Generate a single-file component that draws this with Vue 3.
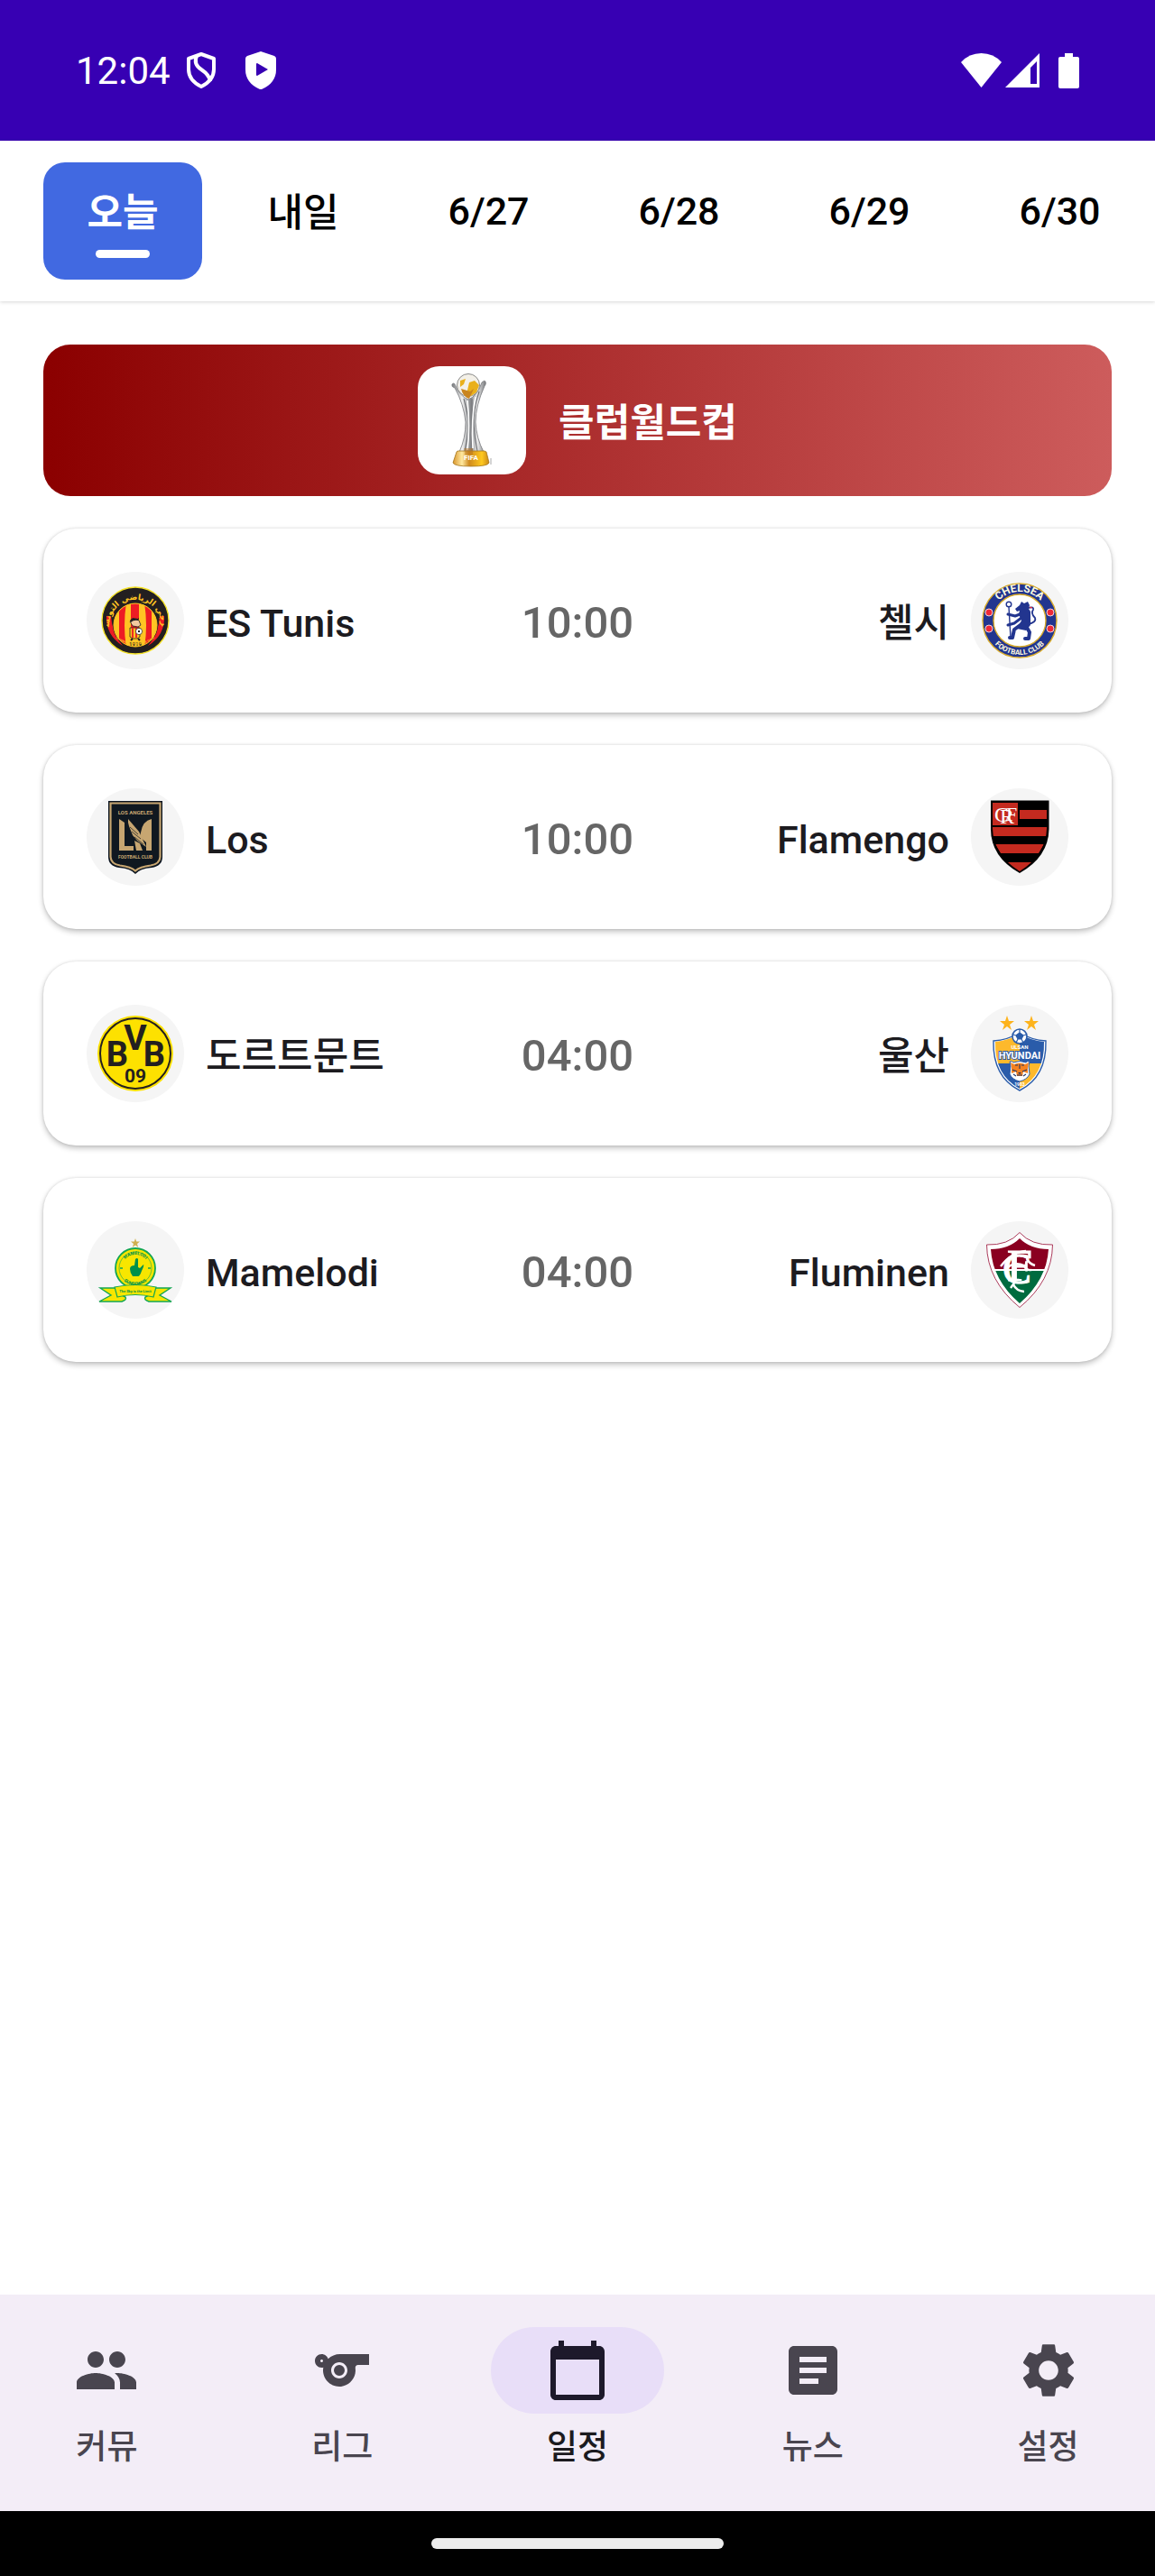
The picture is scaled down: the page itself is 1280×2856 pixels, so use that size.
<script setup>
import { ref } from 'vue'

const days = ['오늘', '내일', '6/27', '6/28', '6/29', '6/30']
const selectedDay = ref(0)

const matches = [
  { home: 'ES Tunis', homeCrest: 'tunis', time: '10:00', away: '첼시', awayCrest: 'chelsea' },
  { home: 'Los', homeCrest: 'lafc', time: '10:00', away: 'Flamengo', awayCrest: 'flamengo' },
  { home: '도르트문트', homeCrest: 'bvb', time: '04:00', away: '울산', awayCrest: 'ulsan' },
  { home: 'Mamelodi', homeCrest: 'sundowns', time: '04:00', away: 'Fluminen', awayCrest: 'fluminense' },
]

const sections = [
  {
    label: '커뮤',
    path: 'M16 11c1.66 0 2.99-1.34 2.99-3S17.66 5 16 5c-1.66 0-3 1.34-3 3s1.34 3 3 3zm-8 0c1.66 0 2.99-1.34 2.99-3S9.66 5 8 5C6.34 5 5 6.34 5 8s1.34 3 3 3zm0 2c-2.33 0-7 1.17-7 3.5V19h14v-2.5c0-2.33-4.67-3.5-7-3.5zm8 0c-.29 0-.62.02-.97.05 1.16.84 1.97 1.97 1.97 3.45V19h6v-2.5c0-2.33-4.67-3.5-7-3.5z',
  },
  {
    label: '리그',
    path: 'M11.23 6c-1.66 0-3.22.66-4.36 1.73C6.54 6.73 5.61 6 4.5 6 3.12 6 2 7.12 2 8.5S3.12 11 4.5 11c.21 0 .41-.03.61-.08-.05.25-.09.51-.1.78-.18 3.68 2.95 6.68 6.68 6.27 2.55-.28 4.68-2.26 5.19-4.77.15-.71.15-1.4.06-2.06-.09-.6.38-1.13.99-1.13H22V6H11.23zM4.5 9c-.28 0-.5-.22-.5-.5s.22-.5.5-.5.5.22.5.5-.22.5-.5.5zM11 15c-1.66 0-3-1.34-3-3s1.34-3 3-3 3 1.34 3 3-1.34 3-3 3zm0-5a2 2 0 1 0 0 4 2 2 0 0 0 0-4z',
  },
  {
    label: '일정',
    path: 'M20 3h-1V1h-2v2H7V1H5v2H4c-1.1 0-2 .9-2 2v16c0 1.1.9 2 2 2h16c1.1 0 2-.9 2-2V5c0-1.1-.9-2-2-2zm0 18H4V8h16v13z',
  },
  {
    label: '뉴스',
    path: 'M19 3H5c-1.1 0-2 .9-2 2v14c0 1.1.9 2 2 2h14c1.1 0 2-.9 2-2V5c0-1.1-.9-2-2-2zm-5 14H7v-2h7v2zm3-4H7v-2h10v2zm0-4H7V7h10v2z',
  },
  {
    label: '설정',
    path: 'M19.14 12.94c.04-.3.06-.61.06-.94 0-.32-.02-.64-.07-.94l2.03-1.58c.18-.14.23-.41.12-.61l-1.92-3.32c-.12-.22-.37-.29-.59-.22l-2.39.96c-.5-.38-1.03-.7-1.62-.94l-.36-2.54c-.04-.24-.24-.41-.48-.41h-3.84c-.24 0-.43.17-.47.41l-.36 2.54c-.59.24-1.13.57-1.62.94l-2.39-.96c-.22-.08-.47 0-.59.22L2.74 8.87c-.12.21-.08.47.12.61l2.03 1.58c-.05.3-.09.63-.09.94s.02.64.07.94l-2.03 1.58c-.18.14-.23.41-.12.61l1.92 3.32c.12.22.37.29.59.22l2.39-.96c.5.38 1.03.7 1.62.94l.36 2.54c.05.24.24.41.48.41h3.84c.24 0 .44-.17.47-.41l.36-2.54c.59-.24 1.13-.56 1.62-.94l2.39.96c.22.08.47 0 .59-.22l1.92-3.32c.12-.22.07-.47-.12-.61l-2.01-1.58zM12 15.6c-1.98 0-3.6-1.62-3.6-3.6s1.62-3.6 3.6-3.6 3.6 1.62 3.6 3.6-1.62 3.6-3.6 3.6z',
  },
]
const activeSection = ref(2)
</script>

<template>
  <div class="screen">
    <!-- Club crests, shared by the match rows -->
    <svg class="sprite" width="0" height="0" aria-hidden="true">
      <defs>
        <path id="arc-tunis-top" d="M25 60A29 29 0 0 1 83 60" />
        <path id="arc-tunis-bottom" d="M20 54A35 35 0 0 0 88 54" />
        <path id="arc-chelsea-top" d="M22 54A32 32 0 0 1 86 54" />
        <path id="arc-chelsea-bottom" d="M16 54A38 38 0 0 0 92 54" />
        <path id="arc-sun-top" d="M39 52A15 15 0 0 1 69 52" />
        <path id="arc-sun-bottom" d="M35 52A19 19 0 0 0 73 52" />
        <clipPath id="clip-tunis"><circle cx="54" cy="59" r="24" /></clipPath>
        <clipPath id="clip-ulsan"><path d="M27 41Q41 40 54 32Q67 40 81 41Q82 78 54 93Q26 78 27 41Z" /></clipPath>
        <clipPath id="clip-flu"><path d="M54 19Q66 31 86 31Q84 65 54 91Q24 65 22 31Q42 31 54 19Z" /></clipPath>
        <clipPath id="clip-fla"><path d="M24 15H84V45Q83 74 54 92Q25 74 24 45Z" /></clipPath>

        <symbol id="crest-tunis" viewBox="0 0 108 108">
          <circle cx="54" cy="54" r="37" fill="#231f20" stroke="#f3e126" stroke-width="1.4" />
          <path d="M22 49Q21 70 40 82Q28 68 27 49Z" fill="#ed1c24" />
          <path d="M86 49Q87 70 68 82Q80 68 81 49Z" fill="#ed1c24" />
          <circle cx="54" cy="59" r="25" fill="#231f20" />
          <g clip-path="url(#clip-tunis)">
            <rect x="28" y="34" width="52" height="52" fill="#ffc423" />
            <path d="M36 34h8q-4 26 0 50h-8zM49 34h9v28h-9zM64 34h8v50h-8q4-24 0-50z" fill="#ed1c24" />
          </g>
          <circle cx="54" cy="59" r="24" fill="none" stroke="#ffc423" />
          <path d="M50 53q4-4 8 1l2 5-3 2-6-1-3-5z" fill="#f2c9a0" stroke="#231f20" stroke-width=".8" />
          <path d="M48 54q3-5 10-3l-1 3q-5-1-8 2z" fill="#231f20" />
          <path d="M51 49q4-2 7 1l-1 2-6-1z" fill="#ed1c24" />
          <path d="M48 62h11v10l-3 2h-5l-3-2z" fill="#ffc423" stroke="#231f20" stroke-width=".8" />
          <path d="M51 62v11M55 62v11" stroke="#ed1c24" stroke-width="1.8" />
          <circle cx="58" cy="66" r="3.6" fill="#fff" stroke="#231f20" stroke-width=".7" />
          <path d="M57 65h2v2h-2z" fill="#231f20" />
          <path d="M51 74l-2 2m8-2l2 2" stroke="#231f20" stroke-width="2" />
          <text x="54" y="82" class="mark" font-size="6" fill="#231f20">1919</text>
          <text class="mark arabic" font-size="9" fill="#ffc423">
            <textPath href="#arc-tunis-top" startOffset="50%">الترجي الرياضي التونسي</textPath>
          </text>
          <text class="mark" font-size="3" fill="#ffc423">
            <textPath href="#arc-tunis-bottom" startOffset="50%">ESPERANCE SPORTIVE DE TUNIS</textPath>
          </text>
        </symbol>

        <symbol id="crest-chelsea" viewBox="0 0 108 108">
          <circle cx="54" cy="54" r="41" fill="#22358f" stroke="#d9ac2b" stroke-width="1.4" />
          <circle cx="54" cy="54" r="29" fill="#fff" stroke="#d9ac2b" stroke-width="1.4" />
          <g fill="#ed2939" stroke="#fff" stroke-width=".8">
            <circle cx="20" cy="45" r="4" /><circle cx="20" cy="63" r="4" />
            <circle cx="88" cy="45" r="4" /><circle cx="88" cy="63" r="4" />
          </g>
          <g fill="none" stroke="#22358f" stroke-linecap="round" stroke-linejoin="round">
            <circle cx="42" cy="36" r="2.8" stroke-width="1.4" />
            <path d="M42 39l2 34" stroke-width="1.4" />
            <path d="M57 46l-8 3-8-2M56 51l-8 6-7 2" stroke-width="3" />
            <path d="M56 58l-8 6-2 9h-3M61 60l4 7-1 7h-4" stroke-width="4" />
            <path d="M63 58q10-2 8-7-5-5-2-9 1-4-5-2" stroke-width="1.8" />
          </g>
          <path d="M54 37l2-4 3 2 4-2 2 4-1 4 2 3v15l-5 6-10-2 5-9-3-7 1-4-3 1-2-3z" fill="#22358f" />
          <path d="M65 39l3 1" stroke="#ed2939" stroke-width="1.2" />
          <text class="mark" font-size="12" fill="#fffbe0">
            <textPath href="#arc-chelsea-top" startOffset="50%">CHELSEA</textPath>
          </text>
          <text class="mark" font-size="8" fill="#fffbe0">
            <textPath href="#arc-chelsea-bottom" startOffset="50%">FOOTBALL CLUB</textPath>
          </text>
        </symbol>

        <symbol id="crest-lafc" viewBox="0 0 108 108">
          <path d="M24 14H84V76Q84 86 72 88Q59 89 54 95Q49 89 36 88Q24 86 24 76Z" fill="#0c1520" />
          <path d="M26.500 16.500H81.500V76Q81 84 71 85.500Q59 87 54 91.500Q49 87 37 85.500Q27 84 26.500 76Z" fill="#101820" stroke="#c7a671" stroke-width="2.2" />
          <path d="M36 34l6 4v26h10v5H36zM60 49q2-13 12-15v35h-6v-9l-7-6zM53 58l6 3 3 8h-7z" fill="#c7a671" />
          <path d="M46 34l12 14 8 17-10-7-5-6-2-5-2-5-1-4z" fill="#c7a671" />
          <path d="M48 43l9 8M50 48l10 8M53 54l10 8" stroke="#101820" stroke-width=".7" />
          <text x="54" y="29" class="mark" font-size="6" fill="#c7a671">LOS ANGELES</text>
          <text x="54" y="78" class="mark" font-size="5" fill="#c7a671">FOOTBALL CLUB</text>
        </symbol>

        <symbol id="crest-flamengo" viewBox="0 0 108 108">
          <path d="M22 13.500H86.500V45Q86 76 54 94Q22 76 22 45Z" fill="#000" />
          <g clip-path="url(#clip-fla)" fill="#c42a1f">
            <path d="M24 16h28v25H24zM54 24h30v10H54zM24 43h60v10H24zM27 62h54l-6 10H33zM39 82h30l-15 12z" />
          </g>
          <g class="monogram" fill="#fff">
            <text x="34" y="37" font-size="24">C</text>
            <text x="40" y="39" font-size="24">R</text>
            <text x="45" y="36" font-size="22">F</text>
          </g>
        </symbol>

        <symbol id="crest-bvb" viewBox="0 0 108 108">
          <circle cx="54" cy="54" r="42" fill="#fde100" />
          <circle cx="54" cy="54" r="39" fill="none" stroke="#231f20" stroke-width="2" />
          <g class="mark" fill="#231f20">
            <text x="34" y="68" font-size="38">B</text>
            <text x="54" y="50" font-size="39">V</text>
            <text x="75" y="68" font-size="38">B</text>
            <text x="54" y="86" font-size="21">09</text>
          </g>
        </symbol>

        <symbol id="crest-ulsan" viewBox="0 0 108 108">
          <path d="M40 12l2 6h6l-5 4 2 6-5-4-5 4 2-6-5-4h6zM67 12l2 6h6l-5 4 2 6-5-4-5 4 2-6-5-4h6z" fill="#fdb31c" />
          <path d="M25 40Q41 39 54 31Q67 39 83 40Q84 80 54 95Q24 80 25 40Z" fill="#fff" stroke="#2a5caa" stroke-width="1.4" />
          <g clip-path="url(#clip-ulsan)">
            <path d="M24 30h30v35H24zM54 65h30v30H54z" fill="#fdb92c" />
            <path d="M54 30h30v35H54zM24 65h30v30H24z" fill="#2a5caa" />
          </g>
          <circle cx="54" cy="35" r="8" fill="#fff" stroke="#2a5caa" stroke-width="1.6" />
          <path d="M54 31l4 3-2 4h-4l-2-4zM54 31v-4M58 34l4-1M56 38l2 4M52 38l-2 4M50 34l-4-1" fill="#2a5caa" stroke="#2a5caa" stroke-width="1.2" />
          <text x="54" y="49" class="mark" font-size="6" fill="#fff">ULSAN</text>
          <text x="54" y="60" class="mark hyundai" font-size="11">HYUNDAI</text>
          <path d="M43 63q3-1 4 1 7-3 14 0 1-2 4-1l-1 5 1 9q-3 6-11 8-8-2-11-8l1-9z" fill="#fff" stroke="#2a5caa" />
          <path d="M44 64l4 2q6-3 12 0l4-2-1 6v6l-5-2-1 5h-6l-1-5-5 2v-6z" fill="#f58220" />
          <path d="M49 67h3M56 67h3M46 72l5 2M62 72l-5 2M54 66v5M51 78h6M47 77l3 2M61 77l-3 2" stroke="#1f3466" stroke-width="1.1" />
          <path d="M52 75h4l-2 2z" fill="#1f3466" />
          <text x="54" y="90" class="mark" font-size="5" fill="#fff">1983</text>
        </symbol>

        <symbol id="crest-sundowns" viewBox="0 0 108 108">
          <path d="M54 19l1.200 3.600h3.800l-3 2.400 1.200 4-3.200-2.400-3.200 2.400 1.200-4-3-2.400h3.800z" fill="#d0b050" />
          <path d="M32 74H15l12 8-13 7h25q6-2 4-5l-4-2M76 74h17l-12 8 13 7H69q-6-2-4-5l4-2" fill="#f7e600" stroke="#13a651" stroke-width="1.400" />
          <circle cx="54" cy="52" r="22" fill="#f7e600" stroke="#13a651" stroke-width="1.800" />
          <circle cx="54" cy="52" r="18" fill="none" stroke="#13a651" stroke-width=".600" />
          <path d="M31 73q23-5 46 0l-3 11q-20-5-40 0z" fill="#f7e600" stroke="#13a651" stroke-width="1.200" />
          <path d="M54 42q2-2 3 0v9l2 1 4-4q1 1-2 7-2 6-4 6h-6q-3-4-3-8 0-4 5-4z" fill="#00904a" />
          <path d="M37 52h3m28 0h3" stroke="#13a651" stroke-width="1.400" />
          <text class="mark" font-size="5" fill="#00904a">
            <textPath href="#arc-sun-top" startOffset="50%">MAMELODI</textPath>
          </text>
          <text class="mark" font-size="5" fill="#00904a">
            <textPath href="#arc-sun-bottom" startOffset="50%">SUNDOWNS</textPath>
          </text>
          <text x="54" y="79" class="mark" font-size="4" fill="#00904a">The Sky is the Limit</text>
        </symbol>

        <symbol id="crest-fluminense" viewBox="0 0 108 108">
          <path d="M54 12.500Q67 27 90.500 26Q90 66 54 95.500Q18 66 17.500 26Q41 27 54 12.500Z" fill="#fff" stroke="#a3264a" stroke-width=".900" />
          <g clip-path="url(#clip-flu)">
            <path d="M20 16h68v37H20z" fill="#8a0020" />
            <path d="M20 55h68v38H20z" fill="#006b3f" />
          </g>
          <g class="monogram" fill="#fff" stroke="#fff">
            <text x="51" y="69" font-size="48">C</text>
            <text x="54" y="66" font-size="50">F</text>
          </g>
          <path d="M33 50q12-16 28-17M62 41q2 6 9 8M39 53q8-9 20-4 2 6 8 5M47 70q3 7 12 8M44 74l5-7" fill="none" stroke="#fff" stroke-width="2.400" />
        </symbol>
      </defs>
    </svg>

    <header class="status-bar">
      <div class="status-group">
        <span class="clock">12:04</span>
        <svg class="shield" width="34" height="42" viewBox="0 0 34 42" aria-hidden="true">
          <path d="M17 3L31 8V20Q31 32 17 39Q3 32 3 20V8Z" fill="none" stroke="#fff" stroke-width="4" stroke-linejoin="round" />
          <path d="M12 5Q8 14 17 20T27 33" fill="none" stroke="#fff" stroke-width="4" />
        </svg>
        <svg class="shield play" width="34" height="42" viewBox="0 0 34 42" aria-hidden="true">
          <path d="M17 0L32 5Q34 6 34 8V20Q34 35 18 42H16Q0 35 0 20V8Q0 6 2 5Z" fill="#fff" />
          <path d="M13 13L25 20L13 27Q12 27 12 26V14Q12 13 13 13Z" fill="#3700b3" />
        </svg>
      </div>
      <div class="status-group">
        <svg width="45" height="38" viewBox="0 0 45 38" aria-hidden="true">
          <path d="M0 10Q9 0 22.500 0T45 10L22.500 38Z" fill="#fff" />
        </svg>
        <svg class="signal" width="38" height="38" viewBox="0 0 38 38" aria-hidden="true">
          <path d="M38 0V38H0ZM35 9L28 16V34H35Z" fill="#fff" fill-rule="evenodd" />
        </svg>
        <svg class="battery" width="23" height="39" viewBox="0 0 23 39" aria-hidden="true">
          <path d="M7 0h9v4h5q2 0 2 2v31q0 2-2 2H2q-2 0-2-2V6q0-2 2-2h5z" fill="#fff" />
        </svg>
      </div>
    </header>

    <div class="days" role="tablist">
      <button
        v-for="(day, i) in days"
        :key="day"
        type="button"
        role="tab"
        class="day"
        :class="{ selected: i === selectedDay, date: i > 1 }"
        :aria-selected="i === selectedDay"
        @click="selectedDay = i"
      >
        <span>{{ day }}</span>
        <span v-if="i === selectedDay" class="indicator"></span>
      </button>
    </div>

    <main class="content">
      <h2 class="league">
        <span class="league-logo">
          <svg width="120" height="120" viewBox="0 0 120 120" aria-hidden="true">
            <defs>
              <linearGradient id="silver" x1="0" x2="1">
                <stop offset="0" stop-color="#77797c" />
                <stop offset=".3" stop-color="#f4f4f4" />
                <stop offset=".55" stop-color="#85878a" />
                <stop offset=".75" stop-color="#e9e9e9" />
                <stop offset="1" stop-color="#77797c" />
              </linearGradient>
              <linearGradient id="gold" x1="0" x2="1">
                <stop offset="0" stop-color="#d9952b" />
                <stop offset=".25" stop-color="#ffe9a0" />
                <stop offset=".45" stop-color="#cf8a1e" />
                <stop offset=".8" stop-color="#ffc91f" />
                <stop offset="1" stop-color="#c98718" />
              </linearGradient>
            </defs>
            <path d="M38 20q2-2 3 0Q46 33 56 37Q66 33 71 18q3-3 4-1 1 3-1 5Q64 44 64 62Q65 80 73 95H46Q53 80 53 62Q51 42 41 24Q37 23 38 20Z" fill="url(#silver)" stroke="#77797c" stroke-width=".800" />
            <path d="M51 36q6 22 5 32-1 14-4 26M60 36v58M68 28q-7 22-6 36 1 16 4 30" fill="none" stroke="#6d6f73" stroke-width="1.100" />
            <path d="M55 38q3 28 0 55M64 34q-5 24-3 57" fill="none" stroke="#fff" stroke-width="1.600" />
            <circle cx="56" cy="21" r="12.500" fill="#f3f0e8" stroke="#8a8a8a" />
            <path d="M47 16l6-2-2 6-4 3zM57 18l6-2 5 5-3 8-6 4-5-2z" fill="#e9b01b" />
            <path d="M48 25l10 3 4-3-5 11q-7-2-9-11z" fill="#c98520" />
            <path d="M44 94h30l2 1 3 12q-1 4-20 4t-20-4l4-12z" fill="url(#gold)" stroke="#a47720" stroke-width=".800" />
            <path d="M51 91q2 5 1 7h9v-7z" fill="#b9731c" opacity=".500" />
            <text x="59" y="104" class="mark" font-size="8" fill="#fff">FIFA</text>
            <path d="M81 102v7" stroke="#aaa" />
          </svg>
        </span>
        <span class="league-name">클럽월드컵</span>
      </h2>

      <article v-for="match in matches" :key="match.home" class="match">
        <div class="team">
          <svg class="crest" width="108" height="108" aria-hidden="true"><use :href="`#crest-${match.homeCrest}`" /></svg>
          <span class="name">{{ match.home }}</span>
        </div>
        <time class="kickoff">{{ match.time }}</time>
        <div class="team away">
          <span class="name">{{ match.away }}</span>
          <svg class="crest" width="108" height="108" aria-hidden="true"><use :href="`#crest-${match.awayCrest}`" /></svg>
        </div>
      </article>
    </main>

    <nav class="bottom-nav">
      <a
        v-for="(section, i) in sections"
        :key="section.label"
        href="#"
        class="section"
        :class="{ active: i === activeSection }"
        @click.prevent="activeSection = i"
      >
        <span class="pill">
          <svg width="72" height="72" viewBox="0 0 24 24" fill="currentColor" aria-hidden="true"><path :d="section.path" /></svg>
        </span>
        <span>{{ section.label }}</span>
      </a>
    </nav>
    <footer class="gesture-bar"><span class="handle"></span></footer>
  </div>
</template>

<style>
body {
  margin: 0;
  background: #fff;
}
</style>

<style scoped>
.screen {
  display: flex;
  flex-direction: column;
  min-height: 100vh;
  overflow-x: hidden;
  background: #fff;
  color: #1c1b1f;
  font-family: Roboto, "Noto Sans CJK KR", sans-serif;
  font-size: 43px;
  font-weight: 500;
}

.sprite {
  display: block;
}

.mark {
  font-family: Roboto, sans-serif;
  font-weight: 700;
  text-anchor: middle;
}

.mark.arabic {
  font-family: "DejaVu Sans", sans-serif;
}

.hyundai {
  fill: #fff;
  stroke: #2a5caa;
  stroke-width: 2px;
  paint-order: stroke;
}

.monogram {
  font-family: "Liberation Serif", serif;
  font-weight: 400;
  text-anchor: middle;
}

.status-bar {
  display: flex;
  align-items: center;
  justify-content: space-between;
  height: 156px;
  padding: 0 84px;
  background: #3700b3;
  color: #fff;
  font-size: 42px;
  font-weight: 400;
}

.status-group {
  display: flex;
  align-items: center;
}

.shield {
  margin-left: 17px;
}

.play {
  margin-left: 32px;
}

.signal {
  margin-left: 4px;
}

.battery {
  margin-left: 21px;
}

.days {
  display: flex;
  gap: 24px;
  padding: 24px 48px;
  background: #fff;
  box-shadow: 0 1px 4px rgba(0, 0, 0, 0.16);
}

.day {
  display: flex;
  flex: none;
  flex-direction: column;
  align-items: center;
  justify-content: flex-start;
  gap: 10px;
  box-sizing: border-box;
  min-width: 176px;
  height: 130px;
  padding: 26px 36px 0;
  border: 0;
  border-radius: 24px;
  background: none;
  color: #000;
  font: inherit;
  line-height: 61px;
}

.day.date {
  min-width: 187px;
  padding-top: 24px;
}

.day.selected {
  background: #4169e1;
  color: #fff;
  font-weight: 700;
}

.indicator {
  width: 60px;
  height: 9px;
  border-radius: 5px;
  background: #fff;
}

.content {
  display: flex;
  flex: 1;
  flex-direction: column;
  gap: 36px;
  padding: 48px;
}

.league {
  display: flex;
  align-items: center;
  justify-content: center;
  gap: 36px;
  height: 168px;
  margin: 0;
  border-radius: 30px;
  background: linear-gradient(90deg, #8b0000, #cd5c5c);
  color: #fff;
  font-size: 43px;
  font-weight: 700;
}

.league-logo {
  display: flex;
  border-radius: 24px;
  background: #fff;
}

.match {
  display: grid;
  grid-template-columns: 1fr auto 1fr;
  align-items: center;
  padding: 48px;
  border-radius: 36px;
  background: #fff;
  box-shadow: 0 3px 6px rgba(0, 0, 0, 0.24), 0 0 3px rgba(0, 0, 0, 0.12);
}

.team {
  display: flex;
  align-items: center;
  gap: 24px;
}

.away {
  justify-content: flex-end;
}

.crest {
  border-radius: 50%;
  background: #f5f5f5;
}

.name,
.kickoff,
.league-name {
  padding-top: 6px;
  line-height: 60px;
}

.kickoff {
  color: #666;
  font-size: 49px;
}

.bottom-nav {
  display: flex;
  gap: 24px;
  box-sizing: border-box;
  height: 240px;
  padding-top: 36px;
  background: #f3edf7;
}

.section {
  display: flex;
  flex: 1;
  flex-direction: column;
  align-items: center;
  gap: 14px;
  color: #49454f;
  font-size: 37px;
  line-height: 48px;
  text-decoration: none;
}

.pill {
  display: flex;
  align-items: center;
  justify-content: center;
  width: 192px;
  height: 96px;
  border-radius: 48px;
}

.active {
  color: #1c1b1f;
}

.active .pill {
  background: #e8def8;
  color: #1d192b;
}

.gesture-bar {
  display: flex;
  align-items: center;
  justify-content: center;
  height: 72px;
  background: #000;
}

.handle {
  width: 324px;
  height: 12px;
  border-radius: 6px;
  background: #ececec;
}
</style>
